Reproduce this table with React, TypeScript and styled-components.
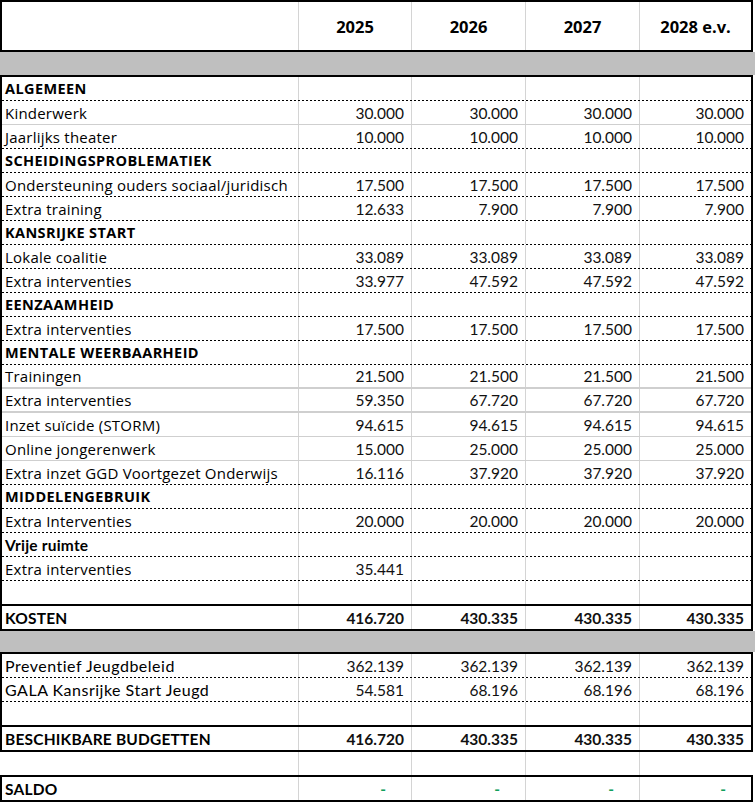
import React from "react";
import styled, { createGlobalStyle, css } from "styled-components";

const GlobalStyle = createGlobalStyle`
  html, body { margin: 0; padding: 0; background: #ffffff; }
  body { font-family: Lato, "Liberation Sans", sans-serif; color: #000; }
`;

const GEO = `"Open Sans", "Noto Sans", sans-serif`;
const CAL = `Lato, "Liberation Sans", sans-serif`;

type Sep = "dash" | "gray" | "gray2" | "none";
type Kind = "item" | "section" | "plainBold" | "plain";

const Sheet = styled.div`
  width: 755px;
  display: flex;
  flex-direction: column;
`;

const Box = styled.div<{ $top?: boolean; $bottom?: boolean; $ghost?: boolean }>`
  width: 753px;
  box-sizing: border-box;
  border-left: 2px solid ${(p) => (p.$ghost ? "transparent" : "#000")};
  border-right: 2px solid ${(p) => (p.$ghost ? "transparent" : "#000")};
  border-top: ${(p) => (p.$top ? "2px solid #000" : "none")};
  border-bottom: ${(p) => (p.$bottom ? "2px solid #000" : "none")};
  display: flex;
  flex-direction: column;
`;

const Band = styled.div<{ $h: number }>`
  width: 755px;
  height: ${(p) => p.$h}px;
  background: #bfbfbf;
`;

const sepStyle = (s: Sep) => {
  switch (s) {
    case "dash":
      return css`
        padding-bottom: 1px;
        background: repeating-linear-gradient(90deg, #000 0 2px, transparent 2px 4px) left bottom / 100% 1px no-repeat;
      `;
    case "gray":
      return css`
        border-bottom: 1px solid #cfcfcf;
      `;
    case "gray2":
      return css`
        border-bottom: 2px solid #cfcfcf;
      `;
    default:
      return css``;
  }
};

const Row = styled.div<{ $sep: Sep; $h?: number }>`
  display: grid;
  grid-template-columns: 296px 113px 114px 114px 112px;
  height: ${(p) => (p.$h ?? 23) - (p.$sep === "gray2" ? 1 : 0)}px;
  ${(p) => sepStyle(p.$sep)}
`;

const Label = styled.div<{ $kind: Kind }>`
  display: flex;
  align-items: center;
  padding-left: 3px;
  white-space: nowrap;
  overflow: hidden;
  ${(p) =>
    p.$kind === "item"
      ? css`
          font-family: ${GEO};
          font-size: 15px;
          letter-spacing: 0.22px;
        `
      : p.$kind === "section"
      ? css`
          font-family: ${GEO};
          font-size: 14.5px;
          font-weight: 700;
          letter-spacing: 0.4px;
        `
      : p.$kind === "plainBold"
      ? css`
          font-family: ${CAL};
          font-size: 15.5px;
          font-weight: 700;
          letter-spacing: 0.2px;
        `
      : css`
          font-family: ${CAL};
          font-size: 16px;
          letter-spacing: 0.5px;
        `}
`;

const Num = styled.div<{ $bold?: boolean }>`
  border-left: 1px solid #d4d4d4;
  display: flex;
  align-items: center;
  justify-content: flex-end;
  padding-right: 7px;
  font-family: ${CAL};
  font-size: 15.5px;
  font-weight: ${(p) => (p.$bold ? 700 : 400)};
  color: #111;
`;

const HeadCell = styled.div`
  border-left: 1px solid #d4d4d4;
  display: flex;
  align-items: center;
  justify-content: center;
  font-family: ${GEO};
  font-size: 16.5px;
  font-weight: 700;
`;

const Blank = styled.div``;

const Dash = styled(Num)`
  padding-right: 25px;
  color: #12a05c;
  font-weight: 700;
`;

type RowData = { label: string; kind: Kind; vals?: string[]; sep: Sep };

const r4 = (v: string) => [v, v, v, v];

const costRows: RowData[] = [
  { label: "ALGEMEEN", kind: "section", sep: "dash" },
  { label: "Kinderwerk", kind: "item", vals: r4("30.000"), sep: "gray" },
  { label: "Jaarlijks theater", kind: "item", vals: r4("10.000"), sep: "dash" },
  { label: "SCHEIDINGSPROBLEMATIEK", kind: "section", sep: "dash" },
  { label: "Ondersteuning ouders sociaal/juridisch", kind: "item", vals: r4("17.500"), sep: "dash" },
  { label: "Extra training", kind: "item", vals: ["12.633", "7.900", "7.900", "7.900"], sep: "dash" },
  { label: "KANSRIJKE START", kind: "section", sep: "dash" },
  { label: "Lokale coalitie", kind: "item", vals: r4("33.089"), sep: "dash" },
  { label: "Extra interventies", kind: "item", vals: ["33.977", "47.592", "47.592", "47.592"], sep: "dash" },
  { label: "EENZAAMHEID", kind: "section", sep: "dash" },
  { label: "Extra interventies", kind: "item", vals: r4("17.500"), sep: "dash" },
  { label: "MENTALE WEERBAARHEID", kind: "section", sep: "dash" },
  { label: "Trainingen", kind: "item", vals: r4("21.500"), sep: "gray2" },
  { label: "Extra interventies", kind: "item", vals: ["59.350", "67.720", "67.720", "67.720"], sep: "gray2" },
  { label: "Inzet suïcide (STORM)", kind: "item", vals: r4("94.615"), sep: "gray" },
  { label: "Online jongerenwerk", kind: "item", vals: ["15.000", "25.000", "25.000", "25.000"], sep: "gray" },
  { label: "Extra inzet GGD Voortgezet Onderwijs", kind: "item", vals: ["16.116", "37.920", "37.920", "37.920"], sep: "dash" },
  { label: "MIDDELENGEBRUIK", kind: "section", sep: "dash" },
  { label: "Extra Interventies", kind: "item", vals: r4("20.000"), sep: "dash" },
  { label: "Vrije ruimte", kind: "plainBold", sep: "dash" },
  { label: "Extra interventies", kind: "item", vals: ["35.441", "", "", ""], sep: "dash" },
  { label: "", kind: "item", sep: "none" },
];

const budgetRows: RowData[] = [
  { label: "Preventief Jeugdbeleid", kind: "plain", vals: r4("362.139"), sep: "dash" },
  { label: "GALA Kansrijke Start Jeugd", kind: "plain", vals: ["54.581", "68.196", "68.196", "68.196"], sep: "dash" },
  { label: "", kind: "plain", sep: "none" },
];

const DataRow: React.FC<{ row: RowData; bold?: boolean }> = ({ row, bold }) => (
  <Row $sep={row.sep}>
    <Label $kind={row.kind}>{row.label}</Label>
    {[0, 1, 2, 3].map((i) => (
      <Num key={i} $bold={bold}>
        {row.vals ? row.vals[i] : ""}
      </Num>
    ))}
  </Row>
);

const years = ["2025", "2026", "2027", "2028 e.v."];
const totals = ["416.720", "430.335", "430.335", "430.335"];

export default function App() {
  return (
    <>
      <GlobalStyle />
      <Sheet>
        <Box $top $bottom>
          <Row $sep="none" $h={48}>
            <Blank />
            {years.map((y) => (
              <HeadCell key={y}>{y}</HeadCell>
            ))}
          </Row>
        </Box>
        <Band $h={23} />
        <Box $top>
          {costRows.map((r, i) => (
            <DataRow key={i} row={r} />
          ))}
        </Box>
        <Box $top $bottom>
          <DataRow row={{ label: "KOSTEN", kind: "plainBold", vals: totals, sep: "none" }} bold />
        </Box>
        <Band $h={21} />
        <Box $top>
          {budgetRows.map((r, i) => (
            <DataRow key={i} row={r} />
          ))}
        </Box>
        <Box $top $bottom>
          <DataRow row={{ label: "BESCHIKBARE BUDGETTEN", kind: "plainBold", vals: totals, sep: "none" }} bold />
        </Box>
        <Box $ghost>
          <DataRow row={{ label: "", kind: "plain", sep: "none" }} />
        </Box>
        <Box $top $bottom>
          <Row $sep="none">
            <Label $kind="plainBold">SALDO</Label>
            {[0, 1, 2, 3].map((i) => (
              <Dash key={i}>-</Dash>
            ))}
          </Row>
        </Box>
      </Sheet>
    </>
  );
}
